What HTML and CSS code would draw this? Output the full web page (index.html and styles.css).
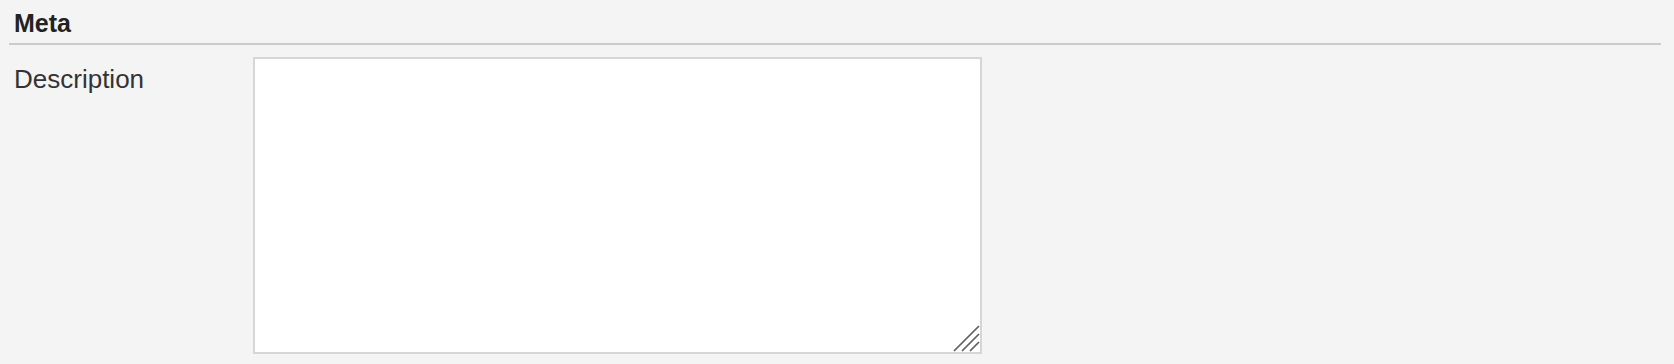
FILE: index.html
```html
<!DOCTYPE html>
<html>
<head>
<meta charset="utf-8">
<link rel="stylesheet" href="styles.css">
</head>
<body>
<div class="page">
  <section class="fieldset">
    <h2 class="legend">Meta</h2>
    <div class="row">
      <label class="label" for="desc">Description</label>
      <div class="field">
        <textarea id="desc" class="textarea"></textarea>
        <svg class="grip" width="28" height="28" viewBox="0 0 28 28" aria-hidden="true">
          <g stroke="#5f5f5f" stroke-width="1.7" stroke-linecap="butt">
            <line x1="2" y1="27" x2="27" y2="2"/>
            <line x1="10" y1="27" x2="27" y2="10"/>
            <line x1="18" y1="27" x2="27" y2="18"/>
          </g>
        </svg>
      </div>
    </div>
  </section>
</div>
</body>
</html>
```

FILE: styles.css
```css
html, body {
  margin: 0;
  padding: 0;
  background: #f4f4f4;
}
body {
  font-family: "Liberation Sans", Arial, sans-serif;
  color: #333;
}
.page {
  padding: 0 13px 0 9px;
}
.fieldset {
  display: flex;
  flex-direction: column;
}
.legend {
  margin: 0;
  padding: 10px 5px 7px;
  font-size: 25px;
  line-height: 26px;
  font-weight: bold;
  color: #222;
  border-bottom: 2px solid #cbcbcb;
}
.row {
  display: flex;
  align-items: flex-start;
  padding-top: 12px;
}
.label {
  width: 239px;
  padding: 7px 0 0 5px;
  font-size: 26px;
  line-height: 30px;
  color: #333;
}
.field {
  position: relative;
  width: 729px;
  height: 297px;
}
.textarea {
  box-sizing: border-box;
  display: block;
  width: 100%;
  height: 100%;
  margin: 0;
  border: 2px solid #d6d6d6;
  background: #fff;
  resize: none;
  outline: none;
}
.grip {
  position: absolute;
  right: 2px;
  bottom: 2px;
}
```
